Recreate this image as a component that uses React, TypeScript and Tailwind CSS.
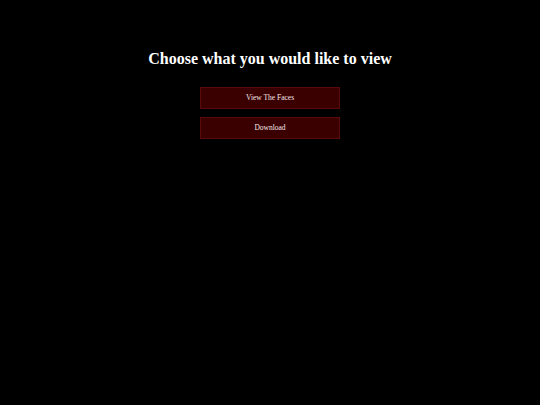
export default function App() {
  return (
    <div className="min-h-[405px] bg-black flex flex-col items-center pt-[49px] font-['Liberation_Serif',serif]">
      <h1 className="text-white font-bold text-[16px] leading-[20px]">
        Choose what you would like to view
      </h1>
      <div className="flex flex-col gap-[8px] mt-[18px]">
        <button className="w-[140px] h-[22px] bg-[#3a0000] border border-[#5a0a0a] text-[#f4e8e8] text-[7.5px]">
          View The Faces
        </button>
        <button className="w-[140px] h-[22px] bg-[#3a0000] border border-[#5a0a0a] text-[#f4e8e8] text-[7.5px]">
          Download
        </button>
      </div>
    </div>
  );
}
